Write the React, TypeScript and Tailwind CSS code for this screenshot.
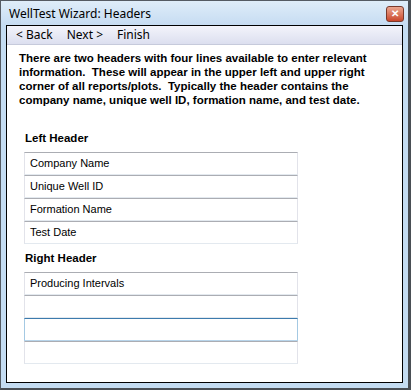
import React from "react";

const leftLines = ["Company Name", "Unique Well ID", "Formation Name", "Test Date"];
const rightLines = ["Producing Intervals", "", "", ""];

function Field({ value, focused }: { value: string; focused?: boolean }) {
  const border = focused
    ? "border-t-[#3d7bad] border-x-[#a4c9e3] border-b-[#b7d4ea]"
    : "border-t-[#abadb3] border-x-[#e2e3ea] border-b-[#e3e9ef]";
  return (
    <div className={`h-[23px] w-[274px] border bg-white pl-[5px] text-[11px] leading-[20px] text-black ${border}`}>
      {value}
    </div>
  );
}

export default function App() {
  return (
    <div className="h-[390px] w-[412px] bg-white font-['Liberation_Sans',Arial,sans-serif]">
      <div className="flex h-[390px] w-[411px] flex-col border border-[#555b63] border-r-[3px] border-b-[2px] border-r-[#4a4f55] border-b-[#4a4f55] bg-[#c4dcf2]">
        {/* title bar */}
        <div className="flex h-[24px] items-center justify-between bg-gradient-to-b from-[#dfedf9] to-[#c6dcf2] pl-[8px] pr-[4px] pt-[2px]">
          <span className="font-['Noto_Sans',sans-serif] text-[12px] text-black">WellTest Wizard: Headers</span>
          <div className="flex h-[16px] w-[18px] items-center justify-center rounded-[3px] border border-[#7a3a2c] bg-gradient-to-b from-[#e9a58f] to-[#c9452a] text-[10px] font-bold leading-none text-white">
            ✕
          </div>
        </div>

        {/* client area */}
        <div className="mx-[5px] mb-[5px] flex flex-1 flex-col border border-black bg-white">
          <div className="flex h-[19px] items-center gap-[14px] border-b border-[#c6cadb] bg-gradient-to-b from-[#f3f4fb] to-[#dcdfef] pl-[9px] font-['Noto_Sans',sans-serif] text-[12px] text-black">
            <span>&lt; Back</span>
            <span>Next &gt;</span>
            <span>Finish</span>
          </div>

          <p className="mt-[6px] pl-[12px] pr-[10px] text-[11.5px] font-bold leading-[14px] text-black">
            There are two headers with four lines available to enter relevant information.&nbsp; These will appear in the upper left and upper right corner of all reports/plots.&nbsp; Typically the header contains the company name, unique well ID, formation name, and test date.
          </p>

          <div className="mt-[24px] pl-[17px]">
            <div className="pl-[1px] text-[11.5px] font-bold leading-[14px] text-black">Left Header</div>
            <div className="mt-[7px] flex flex-col">
              {leftLines.map((l, i) => (
                <Field key={i} value={l} />
              ))}
            </div>

            <div className="mt-[7px] pl-[1px] text-[11.5px] font-bold leading-[14px] text-black">Right Header</div>
            <div className="mt-[7px] flex flex-col">
              {rightLines.map((l, i) => (
                <Field key={i} value={l} focused={i === 2} />
              ))}
            </div>
          </div>
        </div>
      </div>
    </div>
  );
}
